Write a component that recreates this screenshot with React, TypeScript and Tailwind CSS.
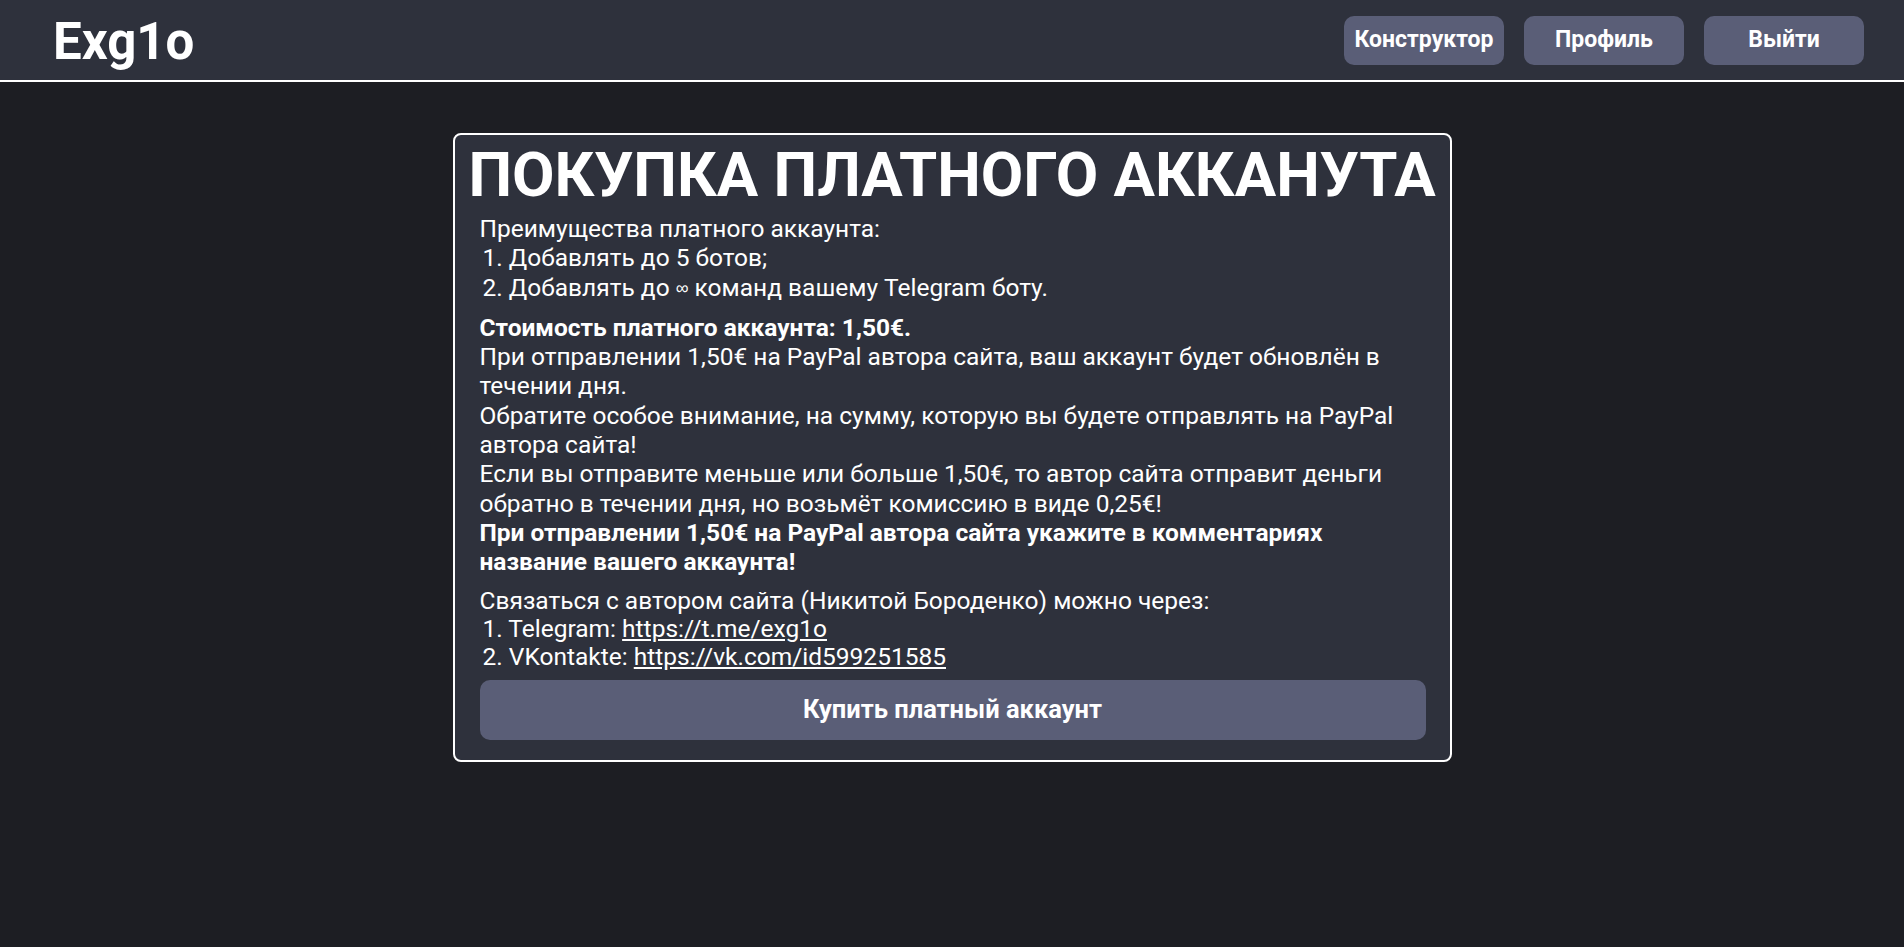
import React from "react";

export default function App() {
  return (
    <div className="min-h-[947px] bg-[#1d1e23] text-white" style={{ fontFamily: "Roboto, 'Noto Sans', sans-serif" }}>
      <header className="h-[82px] bg-[#2e313c] border-b-2 border-white flex items-center justify-between pl-[53px] pr-[40px]">
        <div className="text-[51px] font-bold leading-none mt-[3px]">Exg1o</div>
        <nav className="flex gap-[20px]">
          <button className="w-[160px] h-[49px] rounded-[10px] bg-[#5a5e77] text-[23px] font-bold">Конструктор</button>
          <button className="w-[160px] h-[49px] rounded-[10px] bg-[#5a5e77] text-[23px] font-bold">Профиль</button>
          <button className="w-[160px] h-[49px] rounded-[10px] bg-[#5a5e77] text-[23px] font-bold">Выйти</button>
        </nav>
      </header>
      <main className="flex justify-center pt-[51px]">
        <div className="w-[999px] border-2 border-white rounded-[8px] bg-[#2e313c] pl-[25px] pr-[24px] pb-[20px]">
          <h1 className="-ml-[25px] -mr-[24px] text-[61.7px] font-bold text-center leading-[77px] mt-[2px] whitespace-nowrap">ПОКУПКА ПЛАТНОГО АККАНУТА</h1>
          <div className="text-[24.5px] leading-[29.3px]">
            <p>Преимущества платного аккаунта:</p>
            <p className="pl-[3px]">1. Добавлять до 5 ботов;</p>
            <p className="pl-[3px]">2. Добавлять до <span className="text-[18px] align-[2px]" style={{ fontFamily: "'Liberation Sans', sans-serif" }}>∞</span> команд вашему Telegram боту.</p>
            <div className="mt-[10px]">
              <p className="font-bold">Стоимость платного аккаунта: 1,50€.</p>
              <p>При отправлении 1,50€ на PayPal автора сайта, ваш аккаунт будет обновлён в течении дня.</p>
              <p>Обратите особое внимание, на сумму, которую вы будете отправлять на PayPal автора сайта!</p>
              <p>Если вы отправите меньше или больше 1,50€, то автор сайта отправит деньги обратно в течении дня, но возьмёт комиссию в виде 0,25€!</p>
              <p className="font-bold">При отправлении 1,50€ на PayPal автора сайта укажите в комментариях название вашего аккаунта!</p>
            </div>
            <div className="mt-[10px] leading-[28px]">
              <p>Связаться с автором сайта (Никитой Бороденко) можно через:</p>
              <p className="pl-[3px]">1. Telegram: <a className="underline" href="#">https://t.me/exg1o</a></p>
              <p className="pl-[3px]">2. VKontakte: <a className="underline" href="#">https://vk.com/id599251585</a></p>
            </div>
          </div>
          <button className="mt-[9px] w-full h-[60px] rounded-[10px] bg-[#5a5e77] text-[25.5px] font-bold">Купить платный аккаунт</button>
        </div>
      </main>
    </div>
  );
}
